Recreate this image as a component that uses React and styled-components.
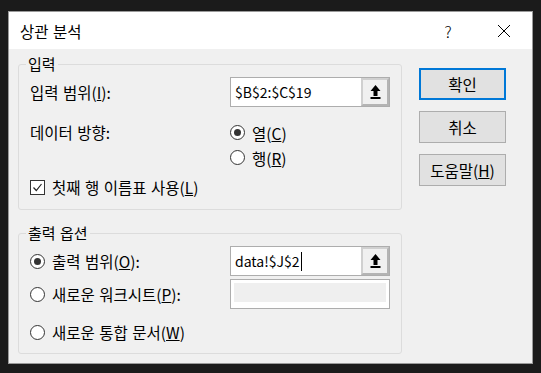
import React from "react";
import styled, { createGlobalStyle } from "styled-components";

const GlobalStyle = createGlobalStyle`
  html, body {
    margin: 0;
    padding: 0;
    background: #1b1b1b;
  }
  body {
    font-family: "Noto Sans CJK KR", "Noto Sans", sans-serif;
    color: #000;
    word-spacing: 1px;
  }
`;

const Screen = styled.div`
  width: 541px;
  height: 373px;
  box-sizing: border-box;
  padding: 11px 8px 0 8px;
`;

const Window = styled.div`
  width: 525px;
  height: 353px;
  box-sizing: border-box;
  border: 1px solid #9a9a9a;
  background: #f0f0f0;
  display: flex;
  flex-direction: column;
`;

const TitleBar = styled.div`
  height: 37px;
  flex-shrink: 0;
  background: #fff;
  display: flex;
  align-items: center;
  padding-left: 11px;
`;

const Title = styled.div`
  flex: 1;
  font-size: 15.5px;
  line-height: 20px;
`;

const CaptionButton = styled.div`
  width: 56px;
  height: 37px;
  display: flex;
  align-items: center;
  justify-content: center;
  font-size: 16px;
  font-weight: 300;
`;

const Body = styled.div`
  flex: 1;
  display: flex;
  gap: 17px;
  padding: 7px 0 0 9px;
`;

const LeftColumn = styled.div`
  width: 384px;
  display: flex;
  flex-direction: column;
  gap: 15px;
`;

const Group = styled.fieldset`
  margin: 0;
  padding: 0 11px;
  min-width: 0;
  box-sizing: border-box;
  height: ${(p) => p.$h}px;
  border: 1px solid #dcdcdc;
  border-radius: 3px;
`;

const Legend = styled.legend`
  margin-left: -4px;
  padding: 0 2px;
  font-size: 15px;
  line-height: 16px;
`;

const Row = styled.div`
  display: flex;
  align-items: ${(p) => (p.$top ? "flex-start" : "center")};
  height: ${(p) => (p.$h ? `${p.$h}px` : "auto")};
  margin-top: ${(p) => p.$mt || 0}px;
`;

const Label = styled.div`
  width: 200px;
  flex-shrink: 0;
  font-size: 15.5px;
  line-height: 25px;
`;

const RadioStack = styled.div`
  display: flex;
  flex-direction: column;
`;

const Option = styled.label`
  display: flex;
  align-items: center;
  gap: 7px;
  height: 25px;
  font-size: 15.5px;
  width: ${(p) => (p.$w ? `${p.$w}px` : "auto")};
  flex-shrink: 0;
`;

const RadioCircle = styled.span`
  width: 13px;
  height: 13px;
  border: 1px solid #333;
  border-radius: 50%;
  background: #fff;
  display: flex;
  align-items: center;
  justify-content: center;
  flex-shrink: 0;
  &::after {
    content: "";
    width: 7px;
    height: 7px;
    border-radius: 50%;
    background: ${(p) => (p.$on ? "#333" : "transparent")};
  }
`;

const CheckBox = styled.span`
  width: 13px;
  height: 13px;
  border: 1px solid #333;
  background: #fff;
  display: flex;
  align-items: center;
  justify-content: center;
  flex-shrink: 0;
`;

const RefInput = styled.div`
  width: 160px;
  height: 30px;
  box-sizing: border-box;
  border: 1px solid #adadad;
  background: #fff;
  display: flex;
`;

const RefText = styled.div`
  flex: 1;
  display: flex;
  align-items: center;
  padding-left: 4px;
  font-size: 14px;
`;

const Caret = styled.span`
  width: 1px;
  height: 19px;
  background: #000;
  margin-left: 1px;
`;

const PickButton = styled.div`
  width: 28px;
  box-sizing: border-box;
  border: 2px solid;
  border-color: #d0d0d0 #b4b4b4 #b4b4b4 #d0d0d0;
  background: #f0f0f0;
  display: flex;
  align-items: center;
  justify-content: center;
`;

const DisabledInput = styled.div`
  width: 160px;
  height: 30px;
  box-sizing: border-box;
  border: 1px solid #adadad;
  background: #fff;
  padding: 3px 3px 6px 3px;
`;

const DisabledFill = styled.div`
  height: 100%;
  background: #efefef;
`;

const ButtonColumn = styled.div`
  width: 87px;
  margin-top: 12px;
  display: flex;
  flex-direction: column;
  gap: 11px;
`;

const DialogButton = styled.div`
  height: 32px;
  box-sizing: border-box;
  border: ${(p) => (p.$focus ? "2px solid #0078d7" : "1px solid #adadad")};
  background: #e1e1e1;
  display: flex;
  align-items: center;
  justify-content: center;
  font-size: 15.5px;
`;

const UpArrow = () => (
  <svg width="11" height="16" viewBox="0 0 11 16">
    <path d="M5.5 1 L10.5 7 L7.5 7 L7.5 12 L3.5 12 L3.5 7 L0.5 7 Z" fill="#000" />
    <rect x="0.5" y="13" width="10" height="2" fill="#000" />
  </svg>
);

const CheckMark = () => (
  <svg width="11" height="11" viewBox="0 0 11 11">
    <polyline points="1.5,5.5 4.3,8.5 9.5,2" fill="none" stroke="#222" strokeWidth="1.2" />
  </svg>
);

const CloseIcon = () => (
  <svg width="14" height="14" viewBox="0 0 14 14">
    <path d="M1 1 L13 13 M13 1 L1 13" stroke="#000" strokeWidth="1" />
  </svg>
);

const Radio = ({ on, w, children }) => (
  <Option $w={w}>
    <RadioCircle $on={on} />
    <span>{children}</span>
  </Option>
);

export default function App() {
  return (
    <Screen>
      <GlobalStyle />
      <Window>
        <TitleBar>
          <Title>상관 분석</Title>
          <CaptionButton>?</CaptionButton>
          <CaptionButton>
            <CloseIcon />
          </CaptionButton>
        </TitleBar>
        <Body>
          <LeftColumn>
            <Group $h={154}>
              <Legend>입력</Legend>
              <Row $h={30} $mt={5}>
                <Label>
                  입력 범위(<u>I</u>):
                </Label>
                <RefInput>
                  <RefText>$B$2:$C$19</RefText>
                  <PickButton>
                    <UpArrow />
                  </PickButton>
                </RefInput>
              </Row>
              <Row $top $mt={13}>
                <Label>데이터 방향:</Label>
                <RadioStack>
                  <Radio on>
                    열(<u>C</u>)
                  </Radio>
                  <Radio>
                    행(<u>R</u>)
                  </Radio>
                </RadioStack>
              </Row>
              <Row $h={24} $mt={5}>
                <Option>
                  <CheckBox>
                    <CheckMark />
                  </CheckBox>
                  <span>
                    첫째 행 이름표 사용(<u>L</u>)
                  </span>
                </Option>
              </Row>
            </Group>
            <Group $h={129}>
              <Legend>출력 옵션</Legend>
              <Row $h={30} $mt={5}>
                <Radio on w={200}>
                  출력 범위(<u>O</u>):
                </Radio>
                <RefInput>
                  <RefText>
                    data!$J$2
                    <Caret />
                  </RefText>
                  <PickButton>
                    <UpArrow />
                  </PickButton>
                </RefInput>
              </Row>
              <Row $h={30} $mt={3}>
                <Radio w={200}>
                  새로운 워크시트(<u>P</u>):
                </Radio>
                <DisabledInput>
                  <DisabledFill />
                </DisabledInput>
              </Row>
              <Row $h={24} $mt={11}>
                <Radio>
                  새로운 통합 문서(<u>W</u>)
                </Radio>
              </Row>
            </Group>
          </LeftColumn>
          <ButtonColumn>
            <DialogButton $focus>확인</DialogButton>
            <DialogButton>취소</DialogButton>
            <DialogButton>
              도움말(<u>H</u>)
            </DialogButton>
          </ButtonColumn>
        </Body>
      </Window>
    </Screen>
  );
}
